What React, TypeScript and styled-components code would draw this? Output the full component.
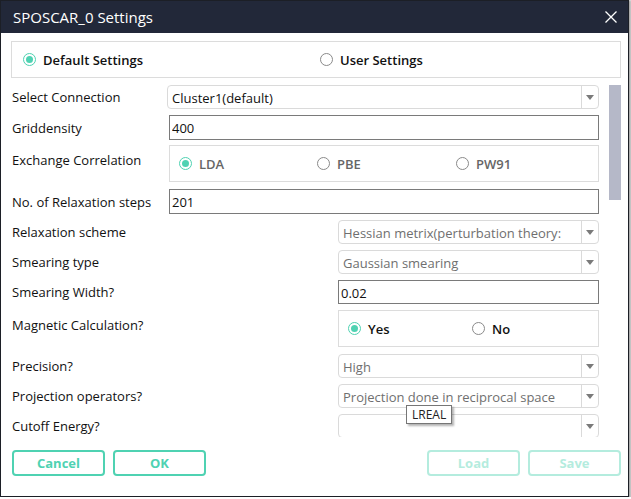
import styled, { createGlobalStyle } from 'styled-components'

const TEAL = '#4fd2b2'
const FONT = '"Open Sans", "Noto Sans", sans-serif'

const Global = createGlobalStyle`
  html, body { margin: 0; padding: 0; background: #fff; }
  body { font-family: ${FONT}; }
  * { box-sizing: border-box; }
`

// ─── Window frame ─────────────────────────────────────────────────────────────

const Window = styled.div`
  width: 629px;
  height: 497px;
  border: 1px solid #1c1f26;
  box-shadow: 1px 1px 2px 1px rgba(0, 0, 0, .35);
  background: #fff;
  display: flex;
  flex-direction: column;
`

const TitleBar = styled.header`
  height: 32px;
  background: #222839;
  display: flex;
  align-items: center;
  justify-content: space-between;
  padding: 0 10px 0 12px;
  color: #fff;
  font-size: 15px;
  flex-shrink: 0;
`

const CloseBtn = styled.button`
  border: none;
  background: none;
  padding: 0;
  width: 14px;
  height: 14px;
  display: flex;
  cursor: pointer;
`

const Body = styled.div`
  flex: 1;
  display: flex;
  flex-direction: column;
  padding: 8px 7px 0 10px;
  min-height: 0;
`

const ModeBox = styled.div`
  height: 37px;
  border: 1px solid #dcdcdc;
  display: grid;
  grid-template-columns: 297px 1fr;
  align-items: center;
  padding-left: 11px;
`

// ─── Scroll area ──────────────────────────────────────────────────────────────

const ScrollArea = styled.div`
  display: flex;
  gap: 10px;
  margin-top: 7px;
  height: 352px;
`

const Fields = styled.div`
  flex: 1;
  overflow: hidden;
  display: flex;
  flex-direction: column;
  padding: 0 0 0 1px;
`

const Track = styled.div`
  width: 12px;
`

const Thumb = styled.div`
  height: 115px;
  background: #b5b8c8;
`

const Row = styled.div<{ $h?: number; $gap?: number; $top?: boolean }>`
  display: flex;
  align-items: ${({ $top }) => ($top ? 'flex-start' : 'center')};
  height: ${({ $h }) => $h ?? 24}px;
  margin-bottom: ${({ $gap }) => $gap ?? 6}px;
  flex-shrink: 0;
`

const Label = styled.div<{ $top?: boolean }>`
  width: 157px;
  font-size: 13px;
  color: #111;
  padding-top: ${({ $top }) => ($top ? '6px' : '0')};
`

const Control = styled.div<{ $narrow?: boolean }>`
  height: 100%;
  ${({ $narrow }) => ($narrow ? 'width: 261px; margin-left: auto;' : 'flex: 1;')}
  position: relative;
`

const Select = styled.div<{ $shift?: boolean }>`
  height: 100%;
  border: 1px solid #dadada;
  border-radius: 4px;
  display: flex;
  align-items: center;
  font-size: 13px;
  margin-left: ${({ $shift }) => ($shift ? '-2px' : '0')};
`

const SelectText = styled.div<{ $dim?: boolean }>`
  flex: 1;
  padding: 1px 0 0 4px;
  color: ${({ $dim }) => ($dim ? '#6f6f6f' : '#111')};
  white-space: nowrap;
  overflow: hidden;
`

const Caret = styled.div`
  width: 17px;
  height: 100%;
  border-left: 1px solid #dadada;
  display: flex;
  align-items: center;
  justify-content: center;
  &::after {
    content: '';
    border-left: 4px solid transparent;
    border-right: 4px solid transparent;
    border-top: 5px solid #7a7a7a;
  }
`

const TextInput = styled.input`
  width: 100%;
  height: 100%;
  border: 1px solid #7a7a7a;
  border-radius: 0;
  font-family: ${FONT};
  font-size: 13px;
  color: #111;
  padding: 1px 2px 0;
  outline: none;
`

const RadioBox = styled.div<{ $cols: string }>`
  height: 100%;
  border: 1px solid #dcdcdc;
  display: grid;
  grid-template-columns: ${({ $cols }) => $cols};
  align-items: center;
  padding-left: 9px;
`

const RadioItem = styled.label<{ $muted?: boolean }>`
  display: flex;
  align-items: center;
  gap: 7px;
  font-size: 13px;
  font-weight: 600;
  color: ${({ $muted }) => ($muted ? '#666' : '#111')};
`

const Dot = styled.span<{ $on?: boolean }>`
  width: 13px;
  height: 13px;
  border-radius: 50%;
  border: 1.5px solid ${({ $on }) => ($on ? TEAL : '#8a8a8a')};
  display: flex;
  align-items: center;
  justify-content: center;
  &::after {
    content: '';
    width: 7px;
    height: 7px;
    border-radius: 50%;
    background: ${({ $on }) => ($on ? TEAL : 'transparent')};
  }
`

const Tooltip = styled.div`
  position: absolute;
  left: 68px;
  top: 21px;
  padding: 0 5px;
  height: 19px;
  line-height: 17px;
  font-size: 12px;
  color: #222;
  background: #fff;
  border: 1px solid #767676;
  box-shadow: 2px 2px 2px rgba(0, 0, 0, .3);
  z-index: 5;
`

// ─── Footer ──────────────────────────────────────────────────────────────────

const Footer = styled.div`
  display: flex;
  gap: 8px;
  margin-top: 13px;
  padding-left: 1px;
`

const Btn = styled.button<{ $faded?: boolean }>`
  width: 93px;
  height: 26px;
  border: 2px solid ${TEAL};
  border-radius: 4px;
  background: #fff;
  color: ${TEAL};
  font-family: ${FONT};
  font-size: 13px;
  font-weight: 700;
  opacity: ${({ $faded }) => ($faded ? 0.42 : 1)};
  cursor: pointer;
`

const Spacer = styled.div`
  flex: 1;
`

function Radio({ label, on, muted }: { label: string; on?: boolean; muted?: boolean }) {
  return (
    <RadioItem $muted={muted}>
      <Dot $on={on} />
      {label}
    </RadioItem>
  )
}

function Dropdown({ value, dim, shift }: { value: string; dim?: boolean; shift?: boolean }) {
  return (
    <Select $shift={shift}>
      <SelectText $dim={dim}>{value}</SelectText>
      <Caret />
    </Select>
  )
}

export default function App() {
  return (
    <>
      <Global />
      <Window>
        <TitleBar>
          SPOSCAR_0 Settings
          <CloseBtn aria-label="close">
            <svg width="14" height="14" viewBox="0 0 14 14">
              <path d="M1.5 1.5 L12.5 12.5 M12.5 1.5 L1.5 12.5" stroke="#fff" strokeWidth="1.3" />
            </svg>
          </CloseBtn>
        </TitleBar>
        <Body>
          <ModeBox>
            <Radio label="Default Settings" on />
            <Radio label="User Settings" />
          </ModeBox>

          <ScrollArea>
            <Fields>
              <Row $gap={6}>
                <Label>Select Connection</Label>
                <Control>
                  <Dropdown value="Cluster1(default)" shift />
                </Control>
              </Row>
              <Row $h={25} $gap={5}>
                <Label>Griddensity</Label>
                <Control>
                  <TextInput defaultValue="400" />
                </Control>
              </Row>
              <Row $h={37} $gap={7} $top>
                <Label $top>Exchange Correlation</Label>
                <Control>
                  <RadioBox $cols="138px 139px 1fr">
                    <Radio label="LDA" on muted />
                    <Radio label="PBE" muted />
                    <Radio label="PW91" muted />
                  </RadioBox>
                </Control>
              </Row>
              <Row $h={25}>
                <Label>No. of Relaxation steps</Label>
                <Control>
                  <TextInput defaultValue="201" />
                </Control>
              </Row>
              <Row>
                <Label>Relaxation scheme</Label>
                <Control $narrow>
                  <Dropdown value="Hessian metrix(perturbation theory:" dim />
                </Control>
              </Row>
              <Row>
                <Label>Smearing type</Label>
                <Control $narrow>
                  <Dropdown value="Gaussian smearing" dim />
                </Control>
              </Row>
              <Row>
                <Label>Smearing Width?</Label>
                <Control $narrow>
                  <TextInput defaultValue="0.02" />
                </Control>
              </Row>
              <Row $h={37} $gap={7} $top>
                <Label $top>Magnetic Calculation?</Label>
                <Control $narrow>
                  <RadioBox $cols="124px 1fr">
                    <Radio label="Yes" on />
                    <Radio label="No" />
                  </RadioBox>
                </Control>
              </Row>
              <Row>
                <Label>Precision?</Label>
                <Control $narrow>
                  <Dropdown value="High" dim />
                </Control>
              </Row>
              <Row>
                <Label>Projection operators?</Label>
                <Control $narrow>
                  <Dropdown value="Projection done in reciprocal space" dim />
                  <Tooltip>LREAL</Tooltip>
                </Control>
              </Row>
              <Row>
                <Label>Cutoff Energy?</Label>
                <Control $narrow>
                  <Dropdown value="" dim />
                </Control>
              </Row>
            </Fields>
            <Track>
              <Thumb />
            </Track>
          </ScrollArea>

          <Footer>
            <Btn>Cancel</Btn>
            <Btn>OK</Btn>
            <Spacer />
            <Btn $faded>Load</Btn>
            <Btn $faded>Save</Btn>
          </Footer>
        </Body>
      </Window>
    </>
  )
}
